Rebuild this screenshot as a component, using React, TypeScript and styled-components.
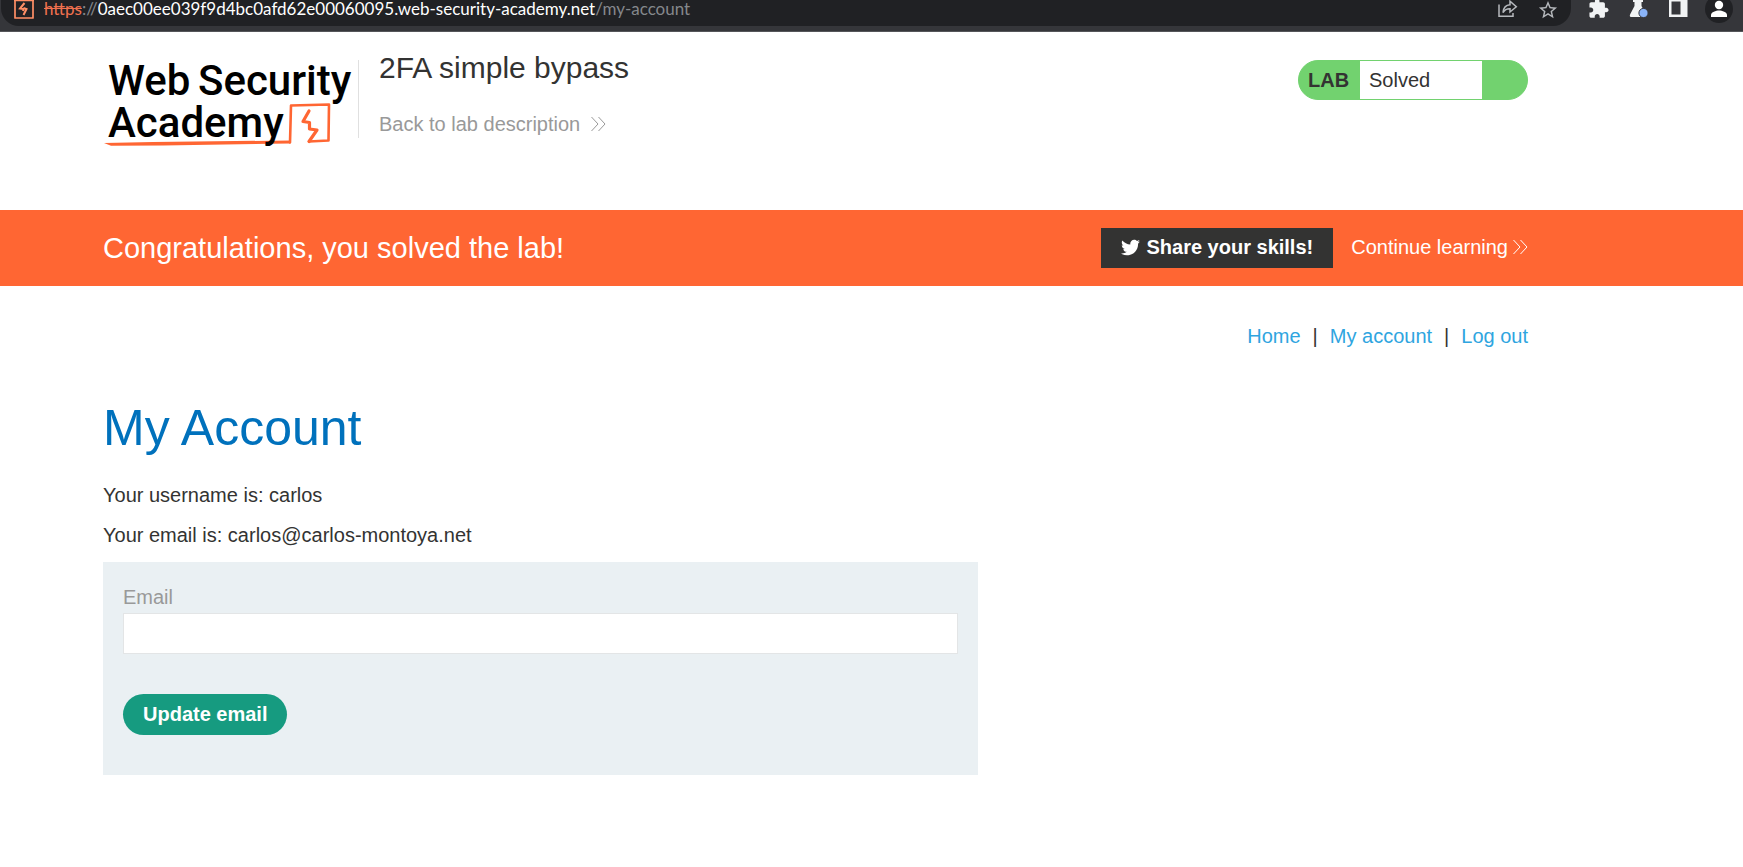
import React from "react";
import styled, { createGlobalStyle } from "styled-components";
import { FaTwitter } from "react-icons/fa";

const GlobalStyle = createGlobalStyle`
  *, *::before, *::after { box-sizing: border-box; }
  body {
    margin: 0;
    background: #fff;
    color: #333332;
    font: 20px/24px "Liberation Sans", Arial, sans-serif;
  }
  h1, h2, p { margin: 0; font-weight: 400; }
  a { text-decoration: none; color: inherit; }
  svg { display: block; flex: none; }
`;

const BrowserBar = styled.div`
  display: flex;
  align-items: flex-start;
  height: 32px;
  padding: 0 10px 0 1px;
  background: #35363a;
  border-bottom: 1px solid #55565a;
`;

const AddressBar = styled.div`
  flex: 1;
  display: flex;
  align-items: flex-start;
  height: 26px;
  padding: 0 13px;
  border-radius: 0 0 18px 18px;
  background: #202124;
`;

const Url = styled.span`
  flex: 1;
  margin-left: 10px;
  font: 17px/18px Lato, "Open Sans", sans-serif;
  white-space: nowrap;
  color: #85888c;
`;

const Scheme = styled.s`
  color: #f0714f;
`;

const Host = styled.span`
  color: #fff;
`;

const AddressActions = styled.div`
  display: flex;
  gap: 20px;
`;

const Toolbar = styled.div`
  display: flex;
  gap: 16px;
  margin-left: 18px;
`;

const Extensions = styled.div`
  display: flex;
  gap: 20px;
`;

const Container = styled.div`
  padding: 0 215px 0 103px;
`;

const Header = styled(Container).attrs({ as: "header" })`
  display: flex;
  align-items: flex-start;
  min-height: 178px;
  padding-top: 18px;
`;

const LogoLink = styled.a`
  margin-top: 2px;
`;

const Divider = styled.div`
  width: 1px;
  height: 78px;
  margin: 10px 20px 0 5px;
  background: #e0e0e0;
`;

const Titles = styled.div`
  flex: 1;
  display: flex;
  flex-direction: column;
  align-items: flex-start;
  gap: 26px;
`;

const LabTitle = styled.h2`
  font-size: 30px;
  line-height: 36px;
`;

const BackLink = styled.a`
  display: flex;
  align-items: center;
  gap: 11px;
  color: #999;
`;

const LabStatus = styled.div`
  display: flex;
  width: 230px;
  height: 40px;
  margin-top: 10px;
  border: 1px solid #72d26f;
  border-radius: 20px;
  overflow: hidden;
  background: #72d26f;
  line-height: 38px;
`;

const LabTag = styled.strong`
  width: 61px;
  padding-left: 9px;
`;

const LabState = styled.span`
  width: 122px;
  padding-left: 9px;
  background: #fff;
`;

const Banner = styled(Container).attrs({ as: "section" })`
  display: flex;
  align-items: center;
  gap: 18px;
  min-height: 76px;
  background: #ff6633;
  color: #fff;
`;

const BannerText = styled.p`
  flex: 1;
  font-size: 29px;
  line-height: 34px;
`;

const ShareButton = styled.button`
  display: flex;
  align-items: center;
  gap: 6px;
  height: 40px;
  padding: 0 20px 2px;
  border: 0;
  background: #333332;
  color: #fff;
  font: inherit;
  font-weight: 700;
`;

const ContinueLink = styled.a`
  display: flex;
  align-items: center;
  gap: 5px;
  padding-bottom: 2px;
`;

const Nav = styled.nav`
  display: flex;
  justify-content: flex-end;
  gap: 12px;
  padding-top: 38px;
`;

const NavLink = styled.a`
  color: #2fa5df;
`;

const PageTitle = styled.h1`
  margin: 50px 0 25px;
  font-size: 50px;
  line-height: 60px;
  color: #0071bc;
`;

const Details = styled.div`
  display: flex;
  flex-direction: column;
  gap: 16px;
  margin-bottom: 15px;
`;

const Form = styled.form`
  display: flex;
  flex-direction: column;
  align-items: flex-start;
  max-width: 875px;
  padding: 20px 20px 40px;
  background: #eaf0f3;
`;

const Label = styled.label`
  line-height: 31px;
  color: #999;
`;

const Input = styled.input`
  width: 100%;
  height: 41px;
  margin-bottom: 40px;
  padding: 0 10px;
  border: 1px solid #e3e5e6;
  background: #fff;
  font: inherit;
`;

const SubmitButton = styled.button`
  height: 41px;
  padding: 0 20px 2px;
  border: 0;
  border-radius: 21px;
  background: #169b80;
  color: #fff;
  font: inherit;
  font-weight: 700;
`;

const Chevrons = () => (
  <svg width="15" height="16" viewBox="0 0 15 16" fill="none" stroke="currentColor" strokeWidth="1">
    <path d="M.5 1l6.5 7-6.5 7M7.5 1L14 8l-6.5 7" />
  </svg>
);

const SiteIcon = () => (
  <svg width="20" height="20" viewBox="0 0 20 20" fill="none" stroke="#ff8f66">
    <path d="M1 -1V18H19V-1M0 .3H20" strokeWidth="1.700" strokeLinejoin="round" />
    <path d="M10.500 3L6 8.500L9.500 9L9 11M9.500 8L12.500 9L9.500 15" strokeWidth="2" />
  </svg>
);

const ShareIcon = () => (
  <svg width="20" height="20" viewBox="0 0 20 20" fill="none" stroke="#b5b8bc" strokeWidth="1.500">
    <path d="M1 4.500V16.300H15V13" />
    <path d="M5 12.500C5.500 7.500 8 5 12 4.800V1.200L18.300 6.800L12 12V8.800C9 8.600 6.800 9.800 5 12.500Z" />
  </svg>
);

const StarIcon = () => (
  <svg width="20" height="20" viewBox="1 1 22 22" fill="#b5b8bc">
    <path d="M22 9.240l-7.190-.620L12 2 9.190 8.630 2 9.240l5.460 4.730L5.820 21 12 17.270 18.180 21l-1.630-7.030L22 9.240zM12 15.400l-3.760 2.270 1-4.280-3.320-2.880 4.380-.380L12 6.100l1.710 4.040 4.380.380-3.320 2.880 1 4.280L12 15.400z" />
  </svg>
);

const PuzzleIcon = () => (
  <svg width="20" height="20" viewBox="1.500 2.500 22 22" fill="#f1f3f4">
    <path d="M20.500 11H19V7c0-1.100-.900-2-2-2h-4V3.500C13 2.120 11.880 1 10.500 1S8 2.120 8 3.500V5H4c-1.100 0-1.990.900-1.990 2v3.800H3.500c1.490 0 2.700 1.210 2.700 2.700s-1.210 2.700-2.700 2.700H2V20c0 1.100.900 2 2 2h3.800v-1.500c0-1.490 1.210-2.700 2.700-2.700 1.490 0 2.700 1.210 2.700 2.700V22H17c1.100 0 2-.900 2-2v-4h1.500c1.380 0 2.500-1.120 2.500-2.500S21.880 11 20.500 11z" />
  </svg>
);

const FlaskIcon = () => (
  <svg width="20" height="20" viewBox="0 0 20 20">
    <path d="M4 0H14V2H12.500V6L17 14.500Q17 17 15 17H2Q0 16.500 1.300 14L5.500 6V2H4Z" fill="#f1f3f4" />
    <circle cx="14.500" cy="13" r="4.600" fill="#8ab4f8" stroke="#35363a" strokeWidth="1" />
  </svg>
);

const PanelIcon = () => (
  <svg width="20" height="20" viewBox="0 0 20 20">
    <path d="M0 0H18.500V17H0Z" fill="#f1f3f4" />
    <path d="M2.500 1.500H11.500V14.500H2.500Z" fill="#35363a" />
  </svg>
);

const AvatarIcon = () => (
  <svg width="28" height="24" viewBox="0 0 28 24">
    <circle cx="14" cy="9" r="14" fill="#202124" />
    <circle cx="14" cy="5" r="4.200" fill="#fff" />
    <path d="M6 17V15C6 12 11 10.500 14 10.500S22 12 22 15V17Z" fill="#fff" />
  </svg>
);

const LogoText = styled.text`
  font: 500 42px Roboto, sans-serif;
  fill: #000;
`;

const Logo = () => (
  <svg width="250" height="96" viewBox="0 -8 250 96" role="img" aria-label="Web Security Academy">
    <g fill="none" stroke="#ff6633" strokeLinejoin="round" strokeLinecap="round">
      <path d="M187 82.500L188 45.500L226 44.500L225.500 80.500L206 81.500" strokeWidth="2.600" />
      <path d="M206 81.500L214 70L206.500 69L206.500 62.500L200 61.500L206 51" strokeWidth="3.200" />
    </g>
    <path d="M1 83L50 82L187 80.500V83.500L60 85.500L8 85.800Z" fill="#ff6633" />
    <LogoText x="5" y="35">Web</LogoText>
    <LogoText x="95" y="35">Security</LogoText>
    <LogoText x="5" y="77">Academy</LogoText>
  </svg>
);

export default function App() {
  return (
    <>
      <GlobalStyle />
      <BrowserBar>
        <AddressBar>
          <SiteIcon />
          <Url>
            <Scheme>https</Scheme>://<Host>0aec00ee039f9d4bc0afd62e00060095.web-security-academy.net</Host>/my-account
          </Url>
          <AddressActions>
            <ShareIcon />
            <StarIcon />
          </AddressActions>
        </AddressBar>
        <Toolbar>
          <Extensions>
            <PuzzleIcon />
            <FlaskIcon />
            <PanelIcon />
          </Extensions>
          <AvatarIcon />
        </Toolbar>
      </BrowserBar>
      <Header>
        <LogoLink href="#academy">
          <Logo />
        </LogoLink>
        <Divider />
        <Titles>
          <LabTitle>2FA simple bypass</LabTitle>
          <BackLink href="#description">
            Back to lab description
            <Chevrons />
          </BackLink>
        </Titles>
        <LabStatus>
          <LabTag>LAB</LabTag>
          <LabState>Solved</LabState>
        </LabStatus>
      </Header>
      <Banner>
        <BannerText>Congratulations, you solved the lab!</BannerText>
        <ShareButton type="button">
          <FaTwitter size={19} />
          Share your skills!
        </ShareButton>
        <ContinueLink href="#continue">
          Continue learning
          <Chevrons />
        </ContinueLink>
      </Banner>
      <Container as="main">
        <Nav>
          <NavLink href="#home">Home</NavLink>
          <span>|</span>
          <NavLink href="#my-account">My account</NavLink>
          <span>|</span>
          <NavLink href="#logout">Log out</NavLink>
        </Nav>
        <PageTitle>My Account</PageTitle>
        <Details>
          <p>Your username is: carlos</p>
          <p>Your email is: carlos@carlos-montoya.net</p>
        </Details>
        <Form onSubmit={(event) => event.preventDefault()}>
          <Label htmlFor="email">Email</Label>
          <Input id="email" type="email" name="email" />
          <SubmitButton type="submit">Update email</SubmitButton>
        </Form>
      </Container>
    </>
  );
}
